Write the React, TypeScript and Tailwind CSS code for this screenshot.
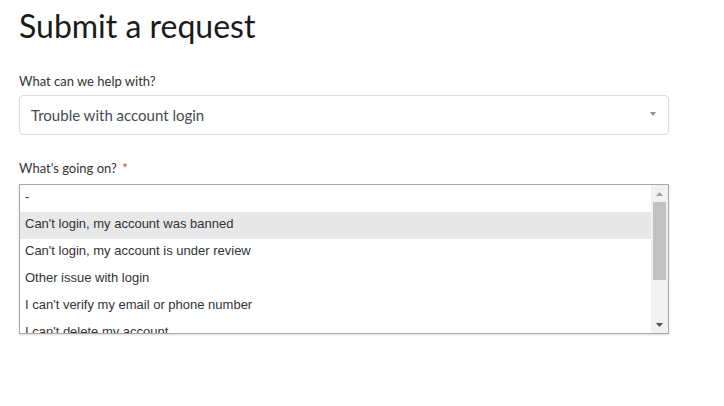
import React from "react";

const options = [
  "-",
  "Can't login, my account was banned",
  "Can't login, my account is under review",
  "Other issue with login",
  "I can't verify my email or phone number",
  "I can't delete my account",
];

export default function App() {
  return (
    <div className="w-[724px] h-[406px] bg-white overflow-hidden pt-[6px] pl-[19px] pr-[55px] font-['Lato','Noto_Sans',sans-serif]">
      <h1 className="text-[32px] leading-[40px] text-[#1a1a1a] font-normal m-0">
        Submit a request
      </h1>

      <div className="mt-[27px] text-[13px] leading-[16px] text-[#333]">
        What can we help with?
      </div>
      <div className="mt-[6px] h-[40px] w-[650px] border border-[#ddd] rounded-[4px] flex items-center justify-between pl-[11px] pr-[12px]">
        <span className="text-[15px] text-[#454a55] leading-[20px]">
          Trouble with account login
        </span>
        <svg width="6" height="4" viewBox="0 0 6 4" className="mt-[-2px]">
          <path d="M0 0 L6 0 L3 4 Z" fill="#8a8f99" />
        </svg>
      </div>

      <div className="mt-[25px] text-[13px] leading-[16px] text-[#333]">
        What's going on? <span className="text-[#e03c3c] ml-[2px]">*</span>
      </div>

      <div className="mt-[8px] w-[650px] h-[150px] border border-[#a9a9a9] flex overflow-hidden shadow-[0_1px_2px_rgba(0,0,0,0.15)]">
        <div className="flex-1 overflow-hidden font-['Liberation_Sans',Arial,sans-serif] text-[13px] text-[#333]">
          {options.map((o, i) => (
            <div
              key={o}
              className={
                i === 1
                  ? "h-[27px] pt-[3px] leading-[17px] pl-[5px] whitespace-nowrap bg-[#e8e8e8]"
                  : "h-[27px] pt-[3px] leading-[17px] pl-[5px] whitespace-nowrap"
              }
            >
              {o}
            </div>
          ))}
        </div>
        <div className="w-[17px] bg-[#f1f1f1] flex flex-col items-center">
          <div className="h-[17px] w-full flex items-center justify-center">
            <svg width="7" height="4" viewBox="0 0 7 4">
              <path d="M0 4 L7 4 L3.5 0 Z" fill="#a3a3a3" />
            </svg>
          </div>
          <div className="w-[13px] h-[78px] bg-[#c1c1c1]" />
          <div className="flex-1" />
          <div className="h-[17px] w-full flex items-center justify-center">
            <svg width="7" height="4" viewBox="0 0 7 4">
              <path d="M0 0 L7 0 L3.5 4 Z" fill="#505050" />
            </svg>
          </div>
        </div>
      </div>
    </div>
  );
}
